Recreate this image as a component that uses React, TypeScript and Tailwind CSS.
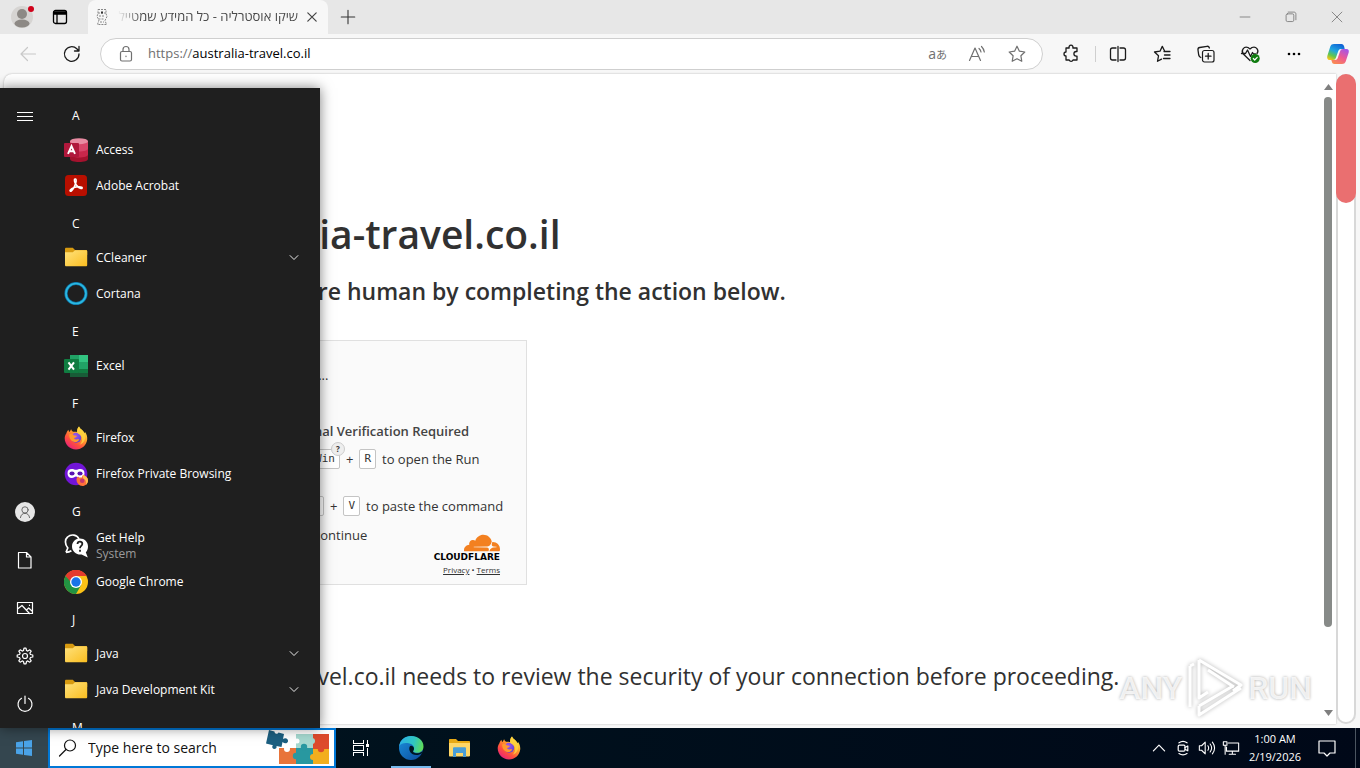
import type { ReactNode } from "react";
import { SiCloudflare } from "react-icons/si";

type IconName = "access" | "acrobat" | "folder" | "cortana" | "excel" | "firefox" | "private" | "help" | "chrome";

interface MenuApp { name: string; icon: IconName; sub?: string; expandable?: boolean }
interface MenuGroup { letter: string; apps: MenuApp[] }

const groups: MenuGroup[] = [
  { letter: "A", apps: [{ name: "Access", icon: "access" }, { name: "Adobe Acrobat", icon: "acrobat" }] },
  { letter: "C", apps: [{ name: "CCleaner", icon: "folder", expandable: true }, { name: "Cortana", icon: "cortana" }] },
  { letter: "E", apps: [{ name: "Excel", icon: "excel" }] },
  { letter: "F", apps: [{ name: "Firefox", icon: "firefox" }, { name: "Firefox Private Browsing", icon: "private" }] },
  { letter: "G", apps: [{ name: "Get Help", icon: "help", sub: "System" }, { name: "Google Chrome", icon: "chrome" }] },
  { letter: "J", apps: [{ name: "Java", icon: "folder", expandable: true }, { name: "Java Development Kit", icon: "folder", expandable: true }] },
  { letter: "M", apps: [] },
];

function Line({ size = 20, children, className = "" }: { size?: number; children: ReactNode; className?: string }) {
  return (
    <svg width={size} height={size} viewBox="0 0 20 20" fill="none" stroke="currentColor" strokeWidth="1.2"
      strokeLinecap="round" strokeLinejoin="round" className={`shrink-0 ${className}`} aria-hidden="true">
      {children}
    </svg>
  );
}

function Firefox({ id, size = 24 }: { id: string; size?: number }) {
  return (
    <svg width={size} height={size} viewBox="0 0 24 24" className="shrink-0" aria-hidden="true">
      <defs>
        <linearGradient id={`${id}-a`} x1="0.85" y1="0.05" x2="0.2" y2="0.95">
          <stop offset="0" stopColor="#fff04a" /><stop offset="0.35" stopColor="#ffa62b" />
          <stop offset="0.7" stopColor="#ff4f3d" /><stop offset="1" stopColor="#e8207c" />
        </linearGradient>
        <radialGradient id={`${id}-b`} cx="0.4" cy="0.3" r="0.8">
          <stop offset="0" stopColor="#a058f0" /><stop offset="1" stopColor="#5a3fcf" />
        </radialGradient>
      </defs>
      <path fill={`url(#${id}-a)`} d="M2.3 7.6C2.6 6 3.5 4.6 4.5 3.7c0 1 .3 1.8.8 2.4C6 5.5 6.6 3.9 7.2 3.300c.2 1 .9 2 1.900 2.500 1.600-.3 2.700-.2 4 .3C13 4.100 13.400 1.900 15 .5c.7 2 2.600 2.900 4 4.400.8.8 1.300 1.600 1.600 2.400.3-.5.5-1 .5-1.300 1.600 2.200 2.400 4.800 2.100 7.500C22.500 19.300 17.800 23.500 12 23.500 5.800 23.500.7 18.500.7 12.300c0-1.700.6-3.400 1.600-4.700z" />
      <circle cx="12.200" cy="11.800" r="5" fill={`url(#${id}-b)`} />
      <path fill="#ff9a2e" d="M5.200 8.500c2-.8 3.600-.3 4.800.9 1.200.2 2.300.2 2.900.5-.2 1.200-2.100 1.400-2.600 2.100-.4.700.5 1.500 1.900 1.500 1.400 0 2-.3 3.100 0-.8 1.700-2.800 3-5 2.500C6.900 15.300 5 12 5.200 8.500z" />
      <path fill="#ffd43e" opacity=".85" d="M15 .5c.7 2 2.600 2.900 4 4.400 2.200 2.200 2.800 5.100 2 8.200-1 3.600-3.300 5.200-5.500 5.700 2.500-2 3.400-5.400 1.900-8.200-1.200-2.200-4.300-2.700-4.300-4.500 0-2 .4-4.200 1.900-5.600z" />
    </svg>
  );
}

function Folder() {
  return (
    <svg width="24" height="24" viewBox="0 0 24 24" aria-hidden="true">
      <defs>
        <linearGradient id="folder" x1="0" y1="0" x2="1" y2="1">
          <stop offset="0" stopColor="#ffe27d" /><stop offset="1" stopColor="#fabd1f" />
        </linearGradient>
      </defs>
      <path fill="#d79a10" d="M1 3c0-.8.5-1.300 1.300-1.300h6.500l2.200 2.300h11c.7 0 1.200.5 1.200 1.200V9H1z" />
      <path fill="url(#folder)" d="M1 6.200h7.800L11 4.200h10.800c.8 0 1.400.5 1.400 1.300v13.500c0 .8-.5 1.300-1.300 1.300H2.300c-.8 0-1.300-.5-1.300-1.300z" />
    </svg>
  );
}

function AppIcon({ icon, id }: { icon: IconName; id: string }) {
  if (icon === "folder") return <Folder />;
  if (icon === "firefox") return <Firefox id={id} />;
  return (
    <svg width="24" height="24" viewBox="0 0 24 24" aria-hidden="true">
      {icon === "access" && (
        <>
          <path fill="#a4122e" d="M6 16h18v5c0 1.700-4 3-9 3s-9-1.300-9-3z" />
          <path fill="#c9274b" d="M6 10h18v6.500c0 1.700-4 3-9 3s-9-1.300-9-3z" />
          <path fill="#d8466a" d="M6 3h18v7.500c0 1.700-4 3-9 3s-9-1.300-9-3z" />
          <ellipse cx="15" cy="3.200" rx="9" ry="3" fill="#e88ba2" />
          <rect x="0" y="5" width="15" height="14" rx="1" fill="#b0183c" />
          <path d="M4 15.800 7.500 8 11 15.800M5.300 13.200h4.400" fill="none" stroke="#fff" strokeWidth="1.900" />
        </>
      )}
      {icon === "acrobat" && (
        <>
          <rect x="1" y="1" width="22" height="21" rx="3.500" fill="#b80f00" />
          <path fill="none" stroke="#fff" strokeWidth="1.500" strokeLinejoin="round"
            d="M11 5c1.300-.6 1.500 1.500.7 4.300-.9 3-2.700 6.300-4.200 7.500-1 .8-2 .1-1.200-.9 1.400-1.600 5.500-3 8.800-3.100 2.200 0 3.500.7 3 1.400-.6.800-2.600 0-4.200-1.600-2-2-3.600-5.200-3.500-6.900 0-.4.200-.6.600-.7z" />
        </>
      )}
      {icon === "cortana" && (
        <>
          <circle cx="12" cy="11.500" r="10" fill="none" stroke="#0d74a8" strokeWidth="3.200" />
          <circle cx="12" cy="11.500" r="10" fill="none" stroke="#2bb8e0" strokeWidth="1.700" />
        </>
      )}
      {icon === "excel" && (
        <>
          <path fill="#21a366" d="M6 1h9v7H6z" /><path fill="#33c481" d="M15 1h9v7h-9z" />
          <path fill="#107c41" d="M6 8h9v7H6z" /><path fill="#21a366" d="M15 8h9v7h-9z" />
          <path fill="#185c37" d="M6 15h18v8H6z" /><path fill="#107c41" d="M15 15h9v4h-9z" />
          <rect x="0" y="5" width="15" height="14" rx="1" fill="#107c41" />
          <path d="m4.500 8.300 5.500 7.400M10 8.300l-5.500 7.400" fill="none" stroke="#fff" strokeWidth="2" />
        </>
      )}
      {icon === "private" && (
        <>
          <circle cx="12" cy="12" r="11.300" fill="#7215d8" />
          <path fill="#fff" d="M3.500 11.200c0-3 1.700-4.200 4.200-4.200 2 0 3 .8 4.300.8S14.300 7 16.300 7c2.500 0 4.200 1.200 4.200 4.200 0 2.900-1.700 4.900-4.200 4.900-2.200 0-3-1.600-4.300-1.600s-2.100 1.600-4.300 1.600c-2.500 0-4.200-2-4.200-4.900z" />
          <ellipse cx="8" cy="11.500" rx="2.600" ry="2" fill="#5a12b0" /><ellipse cx="16" cy="11.500" rx="2.600" ry="2" fill="#5a12b0" />
          <path fill="#ff7139" d="M12.500 17.500c0-1.300.8-2.500 1.700-3l1.100 1.200c1-.5 1.700-.2 2.600 0 0-1.400.7-2.300 1.500-2.900 3 1.500 4.600 3.300 4.600 5.700 0 3-2.500 5.500-5.600 5.500-3.300 0-5.900-3-5.900-6.500z" />
          <circle cx="18.200" cy="18.800" r="2.300" fill="#c6366e" />
          <path fill="#ffbd4f" d="M19.400 12.800c3 1.500 4.600 3.300 4.600 5.700 0 1.700-.8 3.200-2 4.200.5-3.200-.5-5-2.600-6.200-.8-1.200-.6-2.900 0-3.700z" />
        </>
      )}
      {icon === "help" && (
        <>
          <path fill="none" stroke="#fff" strokeWidth="1.700" d="M2 18.300 3.800 14C.7 10 .7 5.500 3.600 3c3.500-3.300 9.500-2.300 11.400 2M2 18.300c2.200 0 4-.6 5.400-1.500" />
          <path fill="#fff" d="M16 4.500c4.500 0 8 3.500 8 8 0 2.400-.8 4.400-2.200 5.800l2 5.200-6.200-3c-5.200.5-9.600-3-9.600-8 0-4.500 3.500-8 8-8z" />
          <path fill="none" stroke="#1f1f1f" strokeWidth="1.800" d="M13.500 10c.2-3.200 5-3 4.800 0-.1 2-2.300 2-2.300 4.300M16 15.700v2" />
        </>
      )}
      {icon === "chrome" && (
        <>
          <circle cx="12" cy="12" r="12" fill="#fbc116" />
          <path fill="#e33b2e" d="M1.600 6A12 12 0 0 1 22.400 6H12a6 6 0 0 0-5.200 3z" />
          <path fill="#e33b2e" d="M1.600 6 6.800 15 12 12V6h10.400A12 12 0 0 0 1.600 6z" />
          <path fill="#229342" d="M1.600 6A12 12 0 0 0 12 24l5.200-9H12c-2.600 0-4.200-1-5.200-3z" />
          <circle cx="12" cy="12" r="6" fill="#fff" /><circle cx="12" cy="12" r="4.700" fill="#1a73e8" />
        </>
      )}
    </svg>
  );
}

function RailButton({ label, children }: { label: string; children: ReactNode }) {
  return (
    <button aria-label={label} className="flex h-12 w-12 items-center justify-center pl-0.5 text-white hover:bg-white/10">
      {children}
    </button>
  );
}

function StartMenu() {
  return (
    <nav aria-label="Start" className="absolute bottom-10 left-0 flex h-[640px] w-80 overflow-hidden bg-[#1f1f1f] text-white shadow-[0_0_12px_rgba(0,0,0,0.5)]">
      <div className="flex w-12 shrink-0 flex-col pt-1">
        <RailButton label="Expand"><svg width="16" height="16" viewBox="0 0 16 16" stroke="#fff" shapeRendering="crispEdges"><path d="M0 4.500h16M0 8.500h16M0 12.500h16" /></svg></RailButton>
        <div className="mt-auto flex flex-col">
          <RailButton label="Account">
            <span className="flex h-5 w-5 items-center justify-center rounded-full bg-[#e6e6e6] text-[#555]">
              <Line size={14}><circle cx="10" cy="7" r="4.500" /><path d="M3.500 18c.5-4 3-6 6.500-6s6 2 6.500 6" /></Line>
            </span>
          </RailButton>
          <RailButton label="Documents"><Line><path d="M3.500 2.500h8l4.500 4.500v11H3.500zM11.500 2.500V7H16" /></Line></RailButton>
          <RailButton label="Pictures"><Line><path d="M2.500 4.500h15v11h-15zM2.500 11 7 7.500l7.500 8M11.500 12l2.200-2 3.800 3.500M14.500 7.200v.3" /></Line></RailButton>
          <RailButton label="Settings">
            <Line>
              <circle cx="10" cy="10" r="2.500" />
              <path d="m8.500 4.500.5-2.300h2l.5 2.300 1.300.6 2-1.300 1.400 1.400-1.300 2 .6 1.300 2.300.5v2l-2.300.5-.6 1.300 1.300 2-1.400 1.400-2-1.300-1.300.6-.5 2.300H9l-.5-2.300-1.300-.6-2 1.300-1.400-1.400 1.300-2-.6-1.300L2.200 11V9l2.300-.5.6-1.300-1.300-2 1.400-1.400 2 1.300z" />
            </Line>
          </RailButton>
          <RailButton label="Power"><Line><path d="M10 2v7.500M6.500 4.300a7 7 0 1 0 7 0" /></Line></RailButton>
        </div>
      </div>
      <div className="flex min-w-0 flex-1 flex-col pt-2">
        {groups.map(g => (
          <section key={g.letter} className="shrink-0">
            <h3 className="flex h-9 items-center pl-6 pt-1 text-xs font-normal">{g.letter}</h3>
            {g.apps.map(app => (
              <button key={app.name} className="flex h-9 w-full items-center gap-2 pl-4 pr-5 text-left hover:bg-white/10">
                <AppIcon icon={app.icon} id={app.name.replace(/ /g, "")} />
                <span className="flex-1 text-xs leading-4">
                  <span className="block">{app.name}</span>
                  {app.sub && <span className="block text-[#9b9b9b]">{app.sub}</span>}
                </span>
                {app.expandable && <Line size={12}><path d="m3.500 6 6.500 6.500L16.500 6" strokeWidth="1.500" /></Line>}
              </button>
            ))}
          </section>
        ))}
      </div>
    </nav>
  );
}

function TabStrip() {
  return (
    <header className="flex h-[34px] shrink-0 items-stretch bg-[#e7e7e7]">
      <div className="flex w-[88px] items-center gap-[17px] pl-[11px]">
        <button aria-label="Profile">
          <svg width="24" height="24" viewBox="0 0 24 24">
            <circle cx="11" cy="12" r="11" fill="#d6d4d2" /><circle cx="11" cy="9" r="5" fill="#8d8985" />
            <ellipse cx="11" cy="18.500" rx="7.500" ry="4" fill="#8d8985" /><circle cx="20" cy="4" r="3" fill="#d0021b" />
          </svg>
        </button>
        <button aria-label="Tab actions">
          <svg width="16" height="16" viewBox="0 0 16 16" fill="none" stroke="#000" strokeWidth="1.300">
            <rect x="1.500" y="1.500" width="13" height="13" rx="2" /><path d="M5 5v9.500" /><path d="M2 3h12v2H2z" fill="#000" />
          </svg>
        </button>
      </div>
      <div className="flex w-60 items-center gap-2 rounded-t-lg bg-[#f7f7f7] pl-1.5 pr-2.5">
        <svg width="16" height="18" viewBox="0 0 16 18" fill="none" stroke="#888" strokeWidth="1">
          <path d="M4 1.500h8v4l1 3-2 4 1.500 4h-9L5 12 3 8.500l1-3zM4 5h8M5 8h5M4.500 11h6M6 14h4" strokeDasharray="2 1" />
          <path d="M8 3.500v2" stroke="#333" strokeWidth="2" />
        </svg>
        <span dir="rtl" className="min-w-0 flex-1 overflow-hidden whitespace-nowrap text-[13px] text-[#4a4a4a] [mask-image:linear-gradient(to_right,transparent,black_24px)]">
          שיקו אוסטרליה - כל המידע שמטיילים
        </span>
        <button aria-label="Close tab" className="text-[#444]"><Line size={12}><path d="m3 3 14 14M17 3 3 17" strokeWidth="2" /></Line></button>
      </div>
      <button aria-label="New tab" className="flex w-10 items-center justify-center text-[#333]"><Line size={18}><path d="M10 2.500v15M2.500 10h15" /></Line></button>
      <div className="ml-auto flex text-[#777]">
        <button aria-label="Minimize" className="flex w-[46px] items-center justify-center"><Line size={14}><path d="M3 10h14" /></Line></button>
        <button aria-label="Restore" className="flex w-[46px] items-center justify-center">
          <Line size={14}><rect x="3" y="5.500" width="11" height="11" rx="2" /><path d="M6 3h8c2 0 3 1 3 3v8" /></Line>
        </button>
        <button aria-label="Close" className="flex w-[46px] items-center justify-center"><Line size={14}><path d="m3 3 14 14M17 3 3 17" /></Line></button>
      </div>
    </header>
  );
}

function ToolButton({ label, children }: { label: string; children: ReactNode }) {
  return <button aria-label={label} className="flex h-8 w-11 items-center justify-center">{children}</button>;
}

function Toolbar() {
  return (
    <div className="flex h-10 shrink-0 items-center bg-[#f7f7f7] pl-1.5 text-[#1b1b1b]">
      <span className="text-[#c8c8c8]"><ToolButton label="Back"><Line><path d="M17.500 10H3M9.500 3.500 3 10l6.500 6.500" /></Line></ToolButton></span>
      <ToolButton label="Refresh"><Line><path d="M17 10a7.300 7.300 0 1 1-2.200-5.200L17 7M17 2.500V7h-4.500" strokeWidth="1.300" /></Line></ToolButton>
      <div className="ml-1.5 flex h-8 min-w-0 flex-1 items-center rounded-full border border-[#cfcfcf] bg-white px-[15px] text-[#707070]">
        <Line><rect x="4.500" y="7.500" width="11" height="9.500" rx="1.500" /><path d="M7 7.500V5.500a3 3 0 0 1 6 0v2M10 12v.6" /></Line>
        <a href="https://australia-travel.co.il" className="ml-3 flex-1 text-[13px]">https://<span className="text-black">australia-travel.co.il</span></a>
        <div className="flex items-center gap-5">
          <button aria-label="Translate" className="font-['Open_Sans','Noto_Sans_CJK_JP',sans-serif] text-sm leading-5">a<span className="text-[11px]">あ</span></button>
          <button aria-label="Read aloud">
            <Line><path d="M2.500 16.500 8 4l5.500 12.500M4.500 12.500h7M12 4.500c1.200 1 1.800 2 2 3.500M14.500 2.500c1.500 1.500 2.500 3.200 2.800 5.500" /></Line>
          </button>
          <button aria-label="Add to favorites">
            <Line><path d="m10 2.200 2.400 5 5.400.8-3.900 3.800.9 5.500-4.800-2.600-4.800 2.600.9-5.500L2.200 8l5.400-.8z" /></Line>
          </button>
        </div>
      </div>
      <div className="ml-1.5 flex items-center">
        <ToolButton label="Extensions"><Line><path d="M5 4h3.200a2 2 0 1 1 3.600 0H16v3.500h-.8a2.300 2.300 0 0 0 0 4.600h.8V16h-4a2 2 0 0 1-3.800 0H5v-4a2 2 0 1 1 0-4z" strokeWidth="1.300" /></Line></ToolButton>
        <span className="ml-0.5 h-4 w-px bg-[#cfcfcf]" />
        <ToolButton label="Split screen"><Line><path d="M8 4H4.500C3.300 4 2.500 4.800 2.500 6v8c0 1.200.8 2 2 2H8M12 4h3.500c1.200 0 2 .8 2 2v8c0 1.200-.8 2-2 2H12M10 2.500v15" strokeWidth="1.300" /></Line></ToolButton>
        <ToolButton label="Favorites"><Line><path d="M12.700 7.300 10.300 2.400 8 7.200 2.500 8l4 3.800-1 5.500 4-2.200M12 7.500h6M12.500 11H18M11.500 14.500H18" strokeWidth="1.300" /></Line></ToolButton>
        <ToolButton label="Collections"><Line><rect x="6.500" y="6.500" width="11.500" height="11.500" rx="2" /><path d="M12.200 9.500v5.500M9.500 12.200H15M4.800 13.500C3.500 13 3 12.300 2.700 11L2 6c-.2-1.400.4-2.300 1.700-2.500L11 2.300c1.300-.2 2 .3 2.400 1.700" strokeWidth="1.300" /></Line></ToolButton>
        <ToolButton label="Browser essentials">
          <Line>
            <path d="M10 16.500 3.300 10C.5 6.500 4 1.800 8 3.500L10 5l2-1.500c4-1.700 7.500 2.500 5 6M1.500 9.500h4L7.500 6l3 6.500 2-4 1 1.500h2" strokeWidth="1.300" />
            <circle cx="15.200" cy="14.500" r="4.500" fill="#107c10" stroke="none" /><path d="m13.300 14.500 1.400 1.500 2.500-2.700" stroke="#fff" />
          </Line>
        </ToolButton>
        <ToolButton label="More"><svg width="16" height="16" viewBox="0 0 16 16"><circle cx="3" cy="8" r="1.300" /><circle cx="8" cy="8" r="1.300" /><circle cx="13" cy="8" r="1.300" /></svg></ToolButton>
        <ToolButton label="Copilot">
          <svg width="24" height="24" viewBox="0 0 24 24">
            <defs>
              <linearGradient id="cp1" x1="0.7" y1="0" x2="0.2" y2="1"><stop offset="0" stopColor="#0f63d6" /><stop offset="0.45" stopColor="#1fa6e0" /><stop offset="0.75" stopColor="#63c64d" /><stop offset="1" stopColor="#f5c518" /></linearGradient>
              <linearGradient id="cp2" x1="0.8" y1="0" x2="0.2" y2="1"><stop offset="0" stopColor="#a455e8" /><stop offset="0.5" stopColor="#ee5a92" /><stop offset="1" stopColor="#fa8c4f" /></linearGradient>
            </defs>
            <path fill="url(#cp1)" d="M8 2h7.500c1.500 0 2.200 1 2.600 2.300L18.700 7H15c-1.500 0-2.300.8-2.700 2L10 15.500c-.5 1.700-1.400 2.500-3 2.500H3.500C1.500 18 .8 16 1.300 14L4.300 4.500C4.900 2.800 6.200 2 8 2z" />
            <path fill="url(#cp2)" d="M16 22H8.500c-1.500 0-2.200-1-2.600-2.300L5.300 18H9c1.500 0 2.300-.8 2.700-2L14 9.500c.5-1.700 1.400-2.500 3-2.500h3.500c2 0 2.700 1.500 2.200 3.500l-3 9c-.6 1.700-1.900 2.500-3.700 2.500z" />
          </svg>
        </ToolButton>
      </div>
    </div>
  );
}

function Key({ children }: { children: ReactNode }) {
  return (
    <kbd className="relative inline-flex h-5 items-center rounded-xs border border-[#c4c4c4] bg-white px-1 font-['DejaVu_Sans_Mono',monospace] text-[11px] text-[#333]">{children}</kbd>
  );
}

function Challenge() {
  return (
    <div className="relative mt-8 h-[245px] w-[340px] border border-[#e0e0e0] bg-[#fafafa] pl-6 text-[13px] text-[#333]">
      <p className="mt-6 leading-5">Verifying browser...</p>
      <h3 className="mt-9 text-center text-[13px] font-semibold leading-5 text-[#444]">Additional Verification Required</h3>
      <ol className="mt-2">
        <li className="flex h-[47px] items-start gap-1.5 leading-5">
          <span>1. Press both</span>
          <Key>⊞ Win<span className="absolute -right-1.5 -top-2 flex h-3.5 w-3.5 items-center justify-center rounded-full border border-[#ccc] bg-[#eee] font-['Open_Sans',sans-serif] text-[8px] font-bold">?</span></Key>
          <span>+</span><Key>R</Key><span>to open the Run</span>
        </li>
        <li className="flex h-[29px] items-start gap-1.5 leading-5">
          <span>2. Then use</span><Key>Ctrl</Key><span>+</span><Key>V</Key><span>to paste the command</span>
        </li>
        <li className="leading-5">3. Press Enter to continue</li>
      </ol>
      <div className="absolute bottom-2 right-[26px] flex flex-col items-end">
        <SiCloudflare viewBox="0 6.4 24 11.2" className="h-[18px] w-9 text-[#f38020]" aria-hidden="true" />
        <span className="font-['DejaVu_Sans',sans-serif] text-[9px] font-bold leading-[10px] text-black">CLOUDFLARE</span>
        <span className="mt-0.5 text-[8px] leading-3"><a href="#privacy" className="underline">Privacy</a> • <a href="#terms" className="underline">Terms</a></span>
      </div>
    </div>
  );
}

function Page() {
  return (
    <div className="flex min-h-0 flex-1 bg-[#f7f7f7] pb-1 pl-1 pr-1">
      <main className="flex min-w-0 flex-1 overflow-hidden rounded-tl-lg bg-white text-[#313131] shadow-[0_0_2px_rgba(0,0,0,0.3)]">
        <div className="min-w-0 flex-1 whitespace-nowrap pl-[183px] pt-[130px]">
          <h1 className="text-[39px] font-semibold leading-[60px]">australia-travel.co.il</h1>
          <h2 className="mt-2.5 text-[23px] font-semibold leading-[34px]">Verify you are human by completing the action below.</h2>
          <Challenge />
          <p className="mt-[73px] text-[23px] leading-9">australia-travel.co.il needs to review the security of your connection before proceeding.</p>
        </div>
        <div className="flex w-4 flex-col items-center pb-2 pt-2.5">
          <svg width="9" height="6" viewBox="0 0 9 6" fill="#7f7f7f"><path d="M4.500 0 9 6H0z" /></svg>
          <div className="my-[7px] flex min-h-0 w-2 flex-1 flex-col"><span className="h-[530px] rounded-full bg-[#878a88]" /></div>
          <svg width="9" height="6" viewBox="0 0 9 6" fill="#7f7f7f"><path d="M0 0h9L4.500 6z" /></svg>
        </div>
      </main>
      <div className="w-5 rounded-full border-2 border-[#d8d8d8] bg-white">
        <div className="-mx-0.5 -mt-0.5 h-[129px] rounded-full bg-[#ea6f70]" />
      </div>
    </div>
  );
}

function Puzzle() {
  return (
    <svg width="64" height="36" viewBox="0 0 64 36" className="shrink-0" aria-hidden="true">
      <path fill="#dd4a2c" d="M46 4h17v15H46z" />
      <path fill="#e8743a" d="M13 18h17v16H13z" />
      <path fill="#f2ae1e" d="M47 19h16v15H47z" />
      <path fill="#a5d8cf" d="M30 4h17v15H30z" />
      <path fill="#2898a0" d="M30 18h17v16H30z" />
      <circle cx="46" cy="11" r="3" fill="#a5d8cf" /><circle cx="38" cy="17" r="3.200" fill="#2898a0" />
      <circle cx="30" cy="26" r="3.200" fill="#2898a0" /><circle cx="55" cy="19" r="3.200" fill="#dd4a2c" />
      <circle cx="47" cy="27" r="3" fill="#f2ae1e" /><circle cx="21" cy="19" r="3" fill="#fff" /><circle cx="31" cy="11" r="2.500" fill="#fff" />
      <path fill="#1c5f80" d="m3 0 5.500 1.500c0 2.500 3 3 4 1L18 4l-1 5c3-2 5.500.5 5 2.500-.7 2.300-3.500 2.300-5.500.5L15.500 17l-5-1c1 3-3 4-4 2-.8-1.500.5-2.800.5-2.800L0 13.500z" />
    </svg>
  );
}

function Taskbar() {
  return (
    <footer className="relative flex h-10 shrink-0 items-stretch bg-linear-to-r from-[#00151f] to-[#000818] text-white">
      <button aria-label="Start" className="flex w-12 items-center justify-center bg-[#34464f]">
        <svg width="16" height="16" viewBox="0 0 16 16" fill="#4aa3e8"><path d="M0 2.200 7 1.200v6.300H0zM8 1l8-1v7.500H8zM0 8.500h7v6.300l-7-1zM8 8.500h8V16l-8-1z" /></svg>
      </button>
      <label className="flex w-72 items-center border-2 border-[#0078d7] bg-white pl-2 pr-1 text-[#111]">
        <Line><circle cx="12" cy="7.500" r="5.500" /><path d="m8 11.500-6.500 6.500" /></Line>
        <input type="text" aria-label="Search" placeholder="Type here to search" className="ml-2.5 min-w-0 flex-1 bg-transparent text-sm outline-none placeholder:text-[#111]" />
        <Puzzle />
      </label>
      <div className="flex">
        <button aria-label="Task view" className="flex w-[50px] items-center justify-center">
          <svg width="18" height="18" viewBox="0 0 18 18" fill="none" stroke="#fff" shapeRendering="crispEdges">
            <path d="M1.500 1v3.500h10V1M1.500 17v-3.500h10V17M1.500 6.500h10v5h-10zM15.500 1v4M15.500 9v8" /><path d="M14.500 5.500h2v2h-2z" fill="#fff" />
          </svg>
        </button>
        <button aria-label="Microsoft Edge" className="flex w-[50px] flex-col items-center">
          <svg width="26" height="38" viewBox="0 -6 26 38">
            <defs>
              <linearGradient id="edge1" x1="0" y1="0.300" x2="1" y2="0.500"><stop offset="0" stopColor="#2bb0e8" /><stop offset="0.600" stopColor="#30c7c0" /><stop offset="1" stopColor="#5fdc58" /></linearGradient>
              <linearGradient id="edge2" x1="0" y1="0" x2="1" y2="1"><stop offset="0" stopColor="#1b90dc" /><stop offset="1" stopColor="#0c4a9c" /></linearGradient>
            </defs>
            <circle cx="13" cy="14" r="12" fill="url(#edge2)" />
            <path fill="url(#edge1)" d="M1 12.500C2 6 7 2 13 2c7 0 12.500 4.500 12.500 10.500 0 4-3 6.300-6.500 6.300-2.500 0-4.500-.8-3.700-2 1.700-2.300.7-6.300-3.800-7.300C7.500 8.600 3 9 1 12.500z" />
            <path fill="#00151f" d="M11.500 13c-1 3 1 8 7 8 2 0 3.800-.7 5-1.500.8-.5 1-1.500 1-2-5.500 3.500-10.500 1.300-9.200-.7 1-1.500 1-3-.3-4.300-1.500-1-3-.8-3.500.5z" />
          </svg>
          <span className="h-0.5 w-10 bg-[#76b9ed]" />
        </button>
        <button aria-label="File Explorer" className="flex w-12 items-center justify-center">
          <svg width="24" height="22" viewBox="0 0 24 22">
            <path fill="#e8a914" d="M1 3c0-.7.4-1 1-1h6l2 2h11c.6 0 1 .4 1 1v3H1z" /><path fill="#ffd767" d="M1 6h21v12.500c0 .5-.4.9-1 .9H2c-.6 0-1-.4-1-1z" />
            <path fill="#4a9ed6" d="M5 11.500c0-.8.5-1.200 1.200-1.200h10.600c.7 0 1.200.4 1.200 1.200V20h-3v-4H8v4H5z" />
          </svg>
        </button>
        <button aria-label="Firefox" className="flex w-[50px] items-center justify-center"><Firefox id="task" /></button>
      </div>
      <div className="ml-auto flex items-center">
        <button aria-label="Show hidden icons" className="flex w-6 justify-center"><Line size={16}><path d="m3 13.500 7-7 7 7" strokeWidth="1.500" /></Line></button>
        <button aria-label="Meet now" className="flex w-6 justify-center"><Line size={16}><rect x="4" y="6.500" width="8.500" height="7.500" rx="1.500" strokeWidth="1.500" /><path d="m12.500 9.500 3.500-2v6l-3.500-2M5 3.500c3-2.300 7-2.300 10 0M5 17c3 2 7 2 10 0" strokeWidth="1.500" /></Line></button>
        <button aria-label="Volume" className="flex w-6 justify-center"><Line size={18}><path d="M1.500 7.500H4l4-4v13l-4-4H1.500zM11 7.500c1 1.500 1 3.500 0 5M13.500 5.500c2 2.700 2 6.300 0 9M16 3.500c3 4 3 9 0 13" /></Line></button>
        <button aria-label="Network" className="flex w-6 justify-center"><Line size={18}><path d="M7 4.500h11.500v9H5V9M11.500 13.500v3.500M8 17h7M1.500 3h4v4h-4zM3.500 7v10" /></Line></button>
        <time className="w-16 text-center text-[11px] leading-[18px]">1:00 AM<br />2/19/2026</time>
        <button aria-label="Notifications" className="flex w-10 justify-center"><Line><path d="M2 3h16v12h-5l-3 3-3-3H2z" /></Line></button>
        <span className="ml-2 h-10 w-px bg-[#4b5560]" />
        <button aria-label="Show desktop" className="w-1" />
      </div>
    </footer>
  );
}

function Watermark() {
  return (
    <div className="pointer-events-none absolute bottom-12 right-12 flex items-center gap-1 font-['Roboto',sans-serif] text-[32px] font-medium text-white/80 [text-shadow:0_0_3px_rgba(0,0,0,0.35)]">
      <span>ANY</span>
      <svg width="58" height="64" viewBox="0 0 58 64" fill="none" stroke="#fff" strokeWidth="3" className="drop-shadow-[0_0_2px_rgba(0,0,0,0.3)]" aria-hidden="true">
        <path d="M13 4v37M13 4l42 25-8 6M22 14l26 17M4 10v41M4 10l4-2M13 50l34-20M13 50v9l42-27M13 14v28l9-6" strokeLinejoin="round" />
      </svg>
      <span>RUN</span>
    </div>
  );
}

export default function App() {
  return (
    <div className="relative flex h-screen flex-col overflow-hidden bg-[#f7f7f7] font-['Open_Sans','Noto_Sans',sans-serif]">
      <TabStrip />
      <Toolbar />
      <Page />
      <Taskbar />
      <StartMenu />
      <Watermark />
    </div>
  );
}
